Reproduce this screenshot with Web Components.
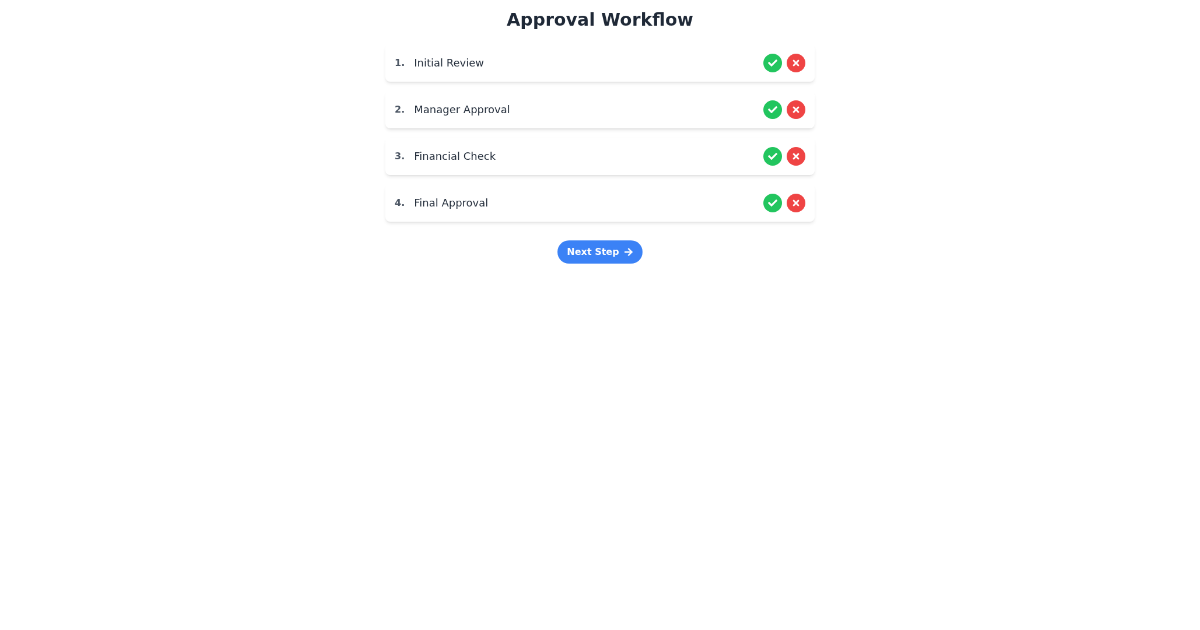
<!DOCTYPE html>
<html lang="en">
<head>
<meta charset="utf-8">
<title>Approval Workflow</title>
<style>
    body {
        margin: 0;
        background: #ffffff;
        color: #1f2937;
        font-family: "DejaVu Sans", sans-serif;
    }
</style>
</head>
<body>
<approval-workflow heading="Approval Workflow">
    <workflow-step number="1">Initial Review</workflow-step>
    <workflow-step number="2">Manager Approval</workflow-step>
    <workflow-step number="3">Financial Check</workflow-step>
    <workflow-step number="4">Final Approval</workflow-step>
    <next-button slot="action">Next Step</next-button>
</approval-workflow>

<script>
const ICONS = {
    check: {
        box: '0 0 512 512',
        width: 16,
        path: 'M173.898 439.404l-166.4-166.4c-9.997-9.997-9.997-26.206 0-36.204l36.203-36.204c9.997-9.998 26.207-9.998 36.204 0L192 312.69 432.095 72.596c9.997-9.997 26.207-9.997 36.204 0l36.203 36.204c9.997 9.997 9.997 26.206 0 36.204l-294.4 294.401c-9.998 9.997-26.207 9.997-36.204-.001z'
    },
    times: {
        // 352 units of glyph, padded to an even pixel width
        box: '-16 0 384 512',
        width: 12,
        path: 'M242.72 256l100.07-100.07c12.28-12.28 12.28-32.19 0-44.48l-22.24-22.24c-12.28-12.28-32.19-12.28-44.48 0L176 189.28 75.93 89.21c-12.28-12.28-32.19-12.28-44.48 0L9.21 111.45c-12.28 12.28-12.28 32.19 0 44.48L109.28 256 9.21 356.07c-12.28 12.28-12.28 32.19 0 44.48l22.24 22.24c12.28 12.28 32.2 12.28 44.48 0L176 322.72l100.07 100.07c12.28 12.28 32.2 12.28 44.48 0l22.24-22.24c12.28-12.28 12.28-32.19 0-44.48L242.72 256z'
    },
    arrow: {
        box: '0 0 448 512',
        width: 14,
        path: 'M190.5 66.9l22.2-22.2c9.4-9.4 24.6-9.4 33.9 0L441 239c9.4 9.4 9.4 24.6 0 33.9L246.6 467.3c-9.4 9.4-24.6 9.4-33.9 0l-22.2-22.2c-9.5-9.5-9.3-25 .4-34.3L311.4 296H24c-13.3 0-24-10.7-24-24v-32c0-13.3 10.7-24 24-24h287.4L190.9 101.2c-9.8-9.3-10-24.8-.4-34.3z'
    }
};

// Solid icon, 16px high, drawn in the current text colour
class SolidIcon extends HTMLElement {
    constructor() {
        super();
        this.attachShadow({ mode: 'open' });
    }

    connectedCallback() {
        const icon = ICONS[this.getAttribute('name')];
        if (!icon) return;

        this.shadowRoot.innerHTML = `
            <style>
                :host { display: inline-flex; }
                svg { display: block; height: 16px; width: ${icon.width}px; }
            </style>
            <svg viewBox="${icon.box}" fill="currentColor" aria-hidden="true"><path d="${icon.path}"/></svg>
        `;
    }
}

// Round approve / reject button
class DecisionButton extends HTMLElement {
    constructor() {
        super();
        this.attachShadow({ mode: 'open' });
    }

    connectedCallback() {
        const reject = this.getAttribute('type') === 'reject';

        this.shadowRoot.innerHTML = `
            <style>
                :host { display: block; }

                button {
                    display: flex;
                    align-items: center;
                    justify-content: center;
                    width: 32px;
                    height: 32px;
                    padding: 0;
                    border: 0;
                    border-radius: 50%;
                    background: ${reject ? '#ef4444' : '#22c55e'};
                    color: #ffffff;
                    cursor: pointer;
                }
            </style>
            <button type="button"><solid-icon name="${reject ? 'times' : 'check'}"></solid-icon></button>
        `;
    }
}

class WorkflowStep extends HTMLElement {
    constructor() {
        super();
        this.attachShadow({ mode: 'open' });
    }

    connectedCallback() {
        this.shadowRoot.innerHTML = `
            <style>
                :host {
                    display: flex;
                    align-items: center;
                    justify-content: space-between;
                    padding: 16px;
                    border-radius: 8px;
                    background: #ffffff;
                    box-shadow: 0 4px 6px -1px rgba(0, 0, 0, 0.1), 0 2px 4px -2px rgba(0, 0, 0, 0.1);
                }

                .info, .actions { display: flex; align-items: center; }
                .info { gap: 16px; }
                .actions { gap: 8px; }

                .number {
                    font-size: 16px;
                    line-height: 24px;
                    font-weight: bold;
                    color: #4b5563;
                }

                .name {
                    font-size: 18px;
                    line-height: 28px;
                }
            </style>
            <div class="info">
                <span class="number">${this.getAttribute('number')}.</span>
                <span class="name"><slot></slot></span>
            </div>
            <div class="actions">
                <decision-button type="approve"></decision-button>
                <decision-button type="reject"></decision-button>
            </div>
        `;
    }
}

class NextButton extends HTMLElement {
    constructor() {
        super();
        this.attachShadow({ mode: 'open' });
    }

    connectedCallback() {
        this.shadowRoot.innerHTML = `
            <style>
                :host { display: block; }

                button {
                    display: flex;
                    align-items: center;
                    gap: 9px;
                    padding: 8px 17px 8px 16px;
                    border: 0;
                    border-radius: 9999px;
                    background: #3b82f6;
                    color: #ffffff;
                    font: bold 16px/24px "DejaVu Sans", sans-serif;
                    cursor: pointer;
                }
            </style>
            <button type="button"><slot></slot><solid-icon name="arrow"></solid-icon></button>
        `;
    }
}

class ApprovalWorkflow extends HTMLElement {
    constructor() {
        super();
        this.attachShadow({ mode: 'open' });
    }

    connectedCallback() {
        this.shadowRoot.innerHTML = `
            <style>
                :host {
                    display: block;
                    box-sizing: border-box;
                    width: 768px;
                    margin: 0 auto;
                    padding: 16px;
                    transform: scale(0.58333);
                    transform-origin: top center;
                    will-change: transform;
                }

                h1 {
                    margin: 0 0 24px;
                    font-size: 30px;
                    line-height: 36px;
                    font-weight: bold;
                    text-align: center;
                }

                .steps {
                    display: flex;
                    flex-direction: column;
                    gap: 16px;
                }

                .footer {
                    display: flex;
                    justify-content: center;
                    margin-top: 32px;
                }
            </style>
            <h1>${this.getAttribute('heading')}</h1>
            <div class="steps"><slot></slot></div>
            <div class="footer"><slot name="action"></slot></div>
        `;
    }
}

customElements.define('solid-icon', SolidIcon);
customElements.define('decision-button', DecisionButton);
customElements.define('workflow-step', WorkflowStep);
customElements.define('next-button', NextButton);
customElements.define('approval-workflow', ApprovalWorkflow);
</script>
</body>
</html>
